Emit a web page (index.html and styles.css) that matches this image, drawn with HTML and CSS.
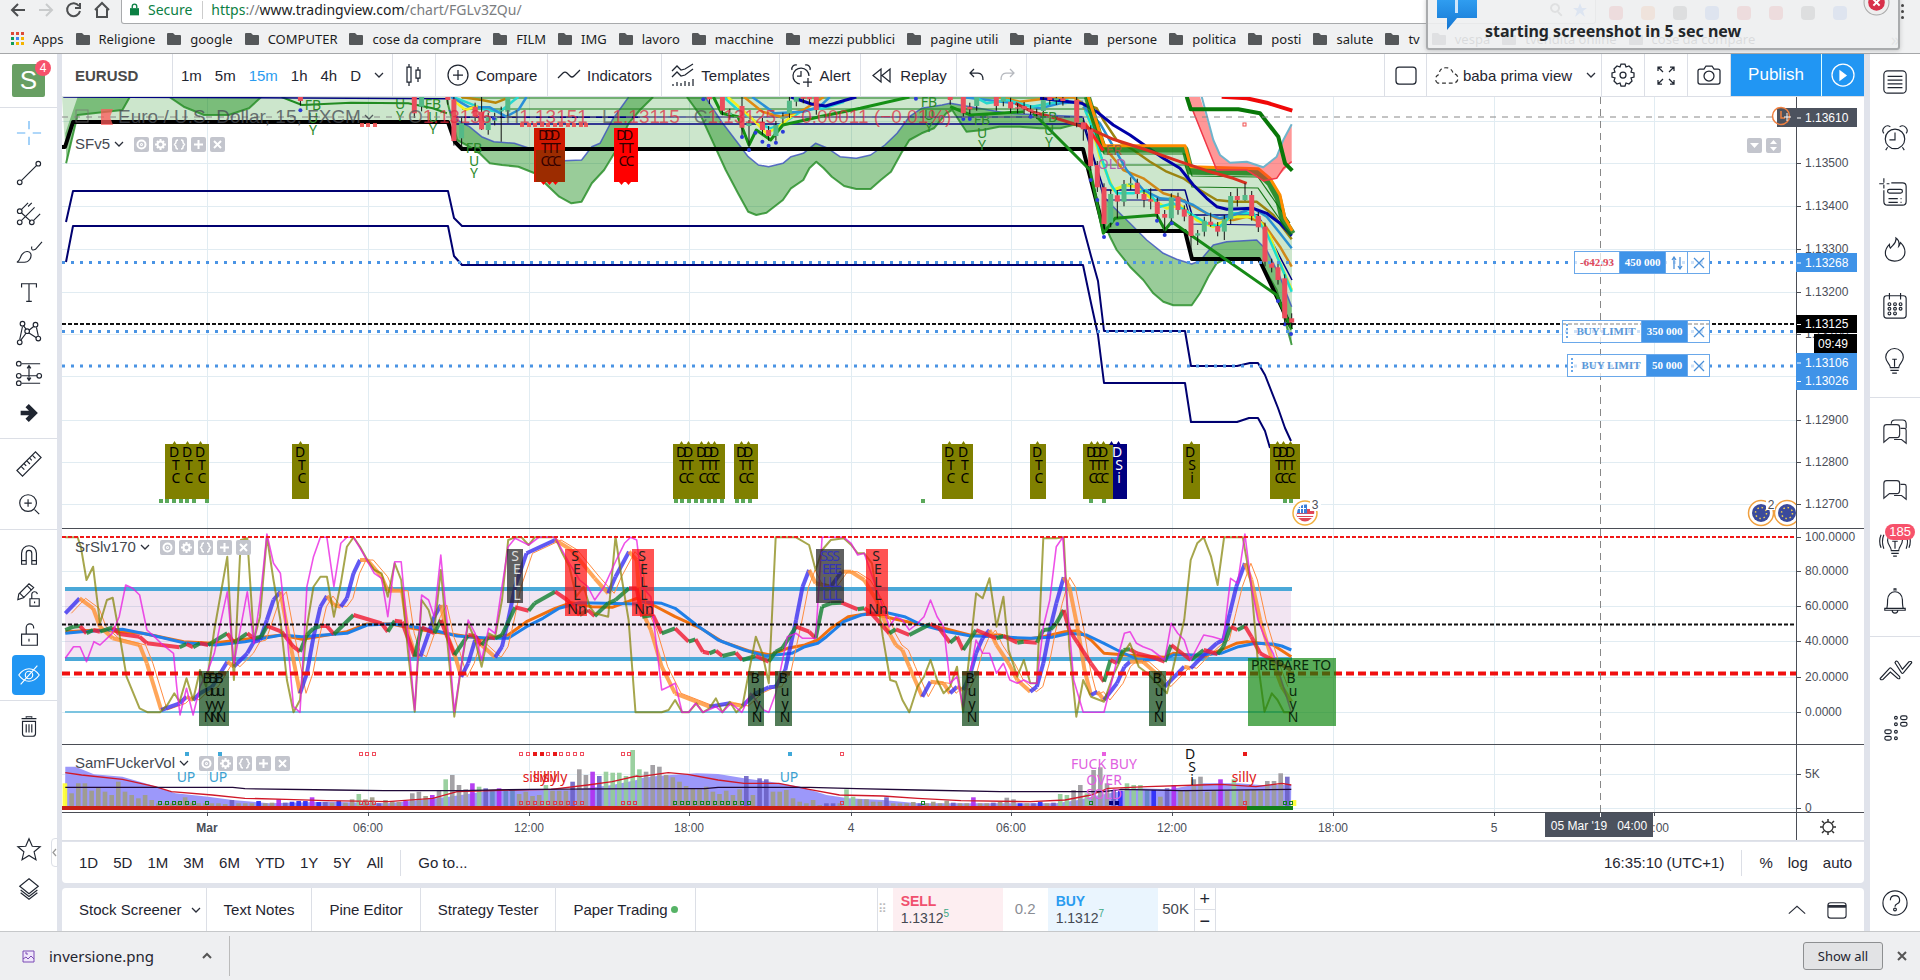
FILE: index.html
```html
<!DOCTYPE html>
<html lang="en">
<head>
<meta charset="utf-8">
<title>EURUSD chart</title>
<link rel="stylesheet" href="styles.css">
</head>
<body>
<svg class="defs" aria-hidden="true">
  <symbol id="folder" viewBox="0 0 14 12"><path fill="#55585a" d="M1 0h5l2 2h5q1 0 1 1v8q0 1-1 1H1q-1 0-1-1V1q0-1 1-1z"/></symbol>
  <symbol id="caret" viewBox="0 0 10 6"><path class="st" d="M1 1l4 4 4-4"/></symbol>
  <symbol id="chats" viewBox="0 0 28 28"><path class="st" d="M5 5h11q3 0 3 3v7q0 4-3 4H8l-6 5V8q0-3 3-3zM20 9h4q2 0 2 2v14l-5-4h-8"/></symbol>
</svg>

<header class="browser">
  <div class="address">
    <button class="nav" aria-label="Back"><svg viewBox="0 0 18 18"><path d="M16 9H3M9 3L3 9l6 6"/></svg></button>
    <button class="nav dim" aria-label="Forward"><svg viewBox="0 0 18 18"><path d="M2 9h13M9 3l6 6-6 6"/></svg></button>
    <button class="nav" aria-label="Reload"><svg viewBox="0 0 18 18"><path d="M14 5a6.500 6.500 0 1 0 1 5M15 2v5h-5"/></svg></button>
    <button class="nav" aria-label="Home"><svg viewBox="0 0 18 18"><path d="M2 9l7-7 7 7M4 8v8h10V8"/></svg></button>
    <div class="url">
      <svg class="lock" viewBox="0 0 10 13"><path fill="#0b8043" d="M0 5h10v8H0z"/><path fill="none" stroke="#0b8043" stroke-width="1.500" d="M2.500 5V3a2.500 2.500 0 0 1 5 0v2"/></svg>
      <span class="secure">Secure</span><span class="bar"></span>
      <span><b class="secure">https</b>://<b class="host">www.tradingview.com</b>/chart/FGLv3ZQu/</span>
      <span class="extensions">
        <svg viewBox="0 0 14 14"><path fill="none" stroke="#555" stroke-width="2" d="M6 1a4 4 0 1 0 .1 0M9 9l4 4"/></svg>
        <svg viewBox="0 0 14 14"><path fill="#4285f4" d="M7 0l2 5h5l-4 3 2 6-5-4-5 4 2-6-4-3h5z"/></svg>
      </span>
    </div>
    <div class="extensions outer">
      <i class="x1"></i><i class="x2"></i><i class="x3"></i><i class="x4"></i><i class="x1"></i><i class="x1"></i><i class="x3"></i><i class="x4"></i>
    </div>
    <button class="kebab" aria-label="Menu"><i></i><i></i><i></i></button>
  </div>
  <nav class="bookmarks">
    <a href="#" class="apps"><svg viewBox="0 0 13 13"><path fill="#dd4b39" d="M0 0h3v3H0zM5 0h3v3H5zM10 0h3v3h-3z"/><path fill="#0f9d58" d="M0 5h3v3H0zM0 10h3v3H0z"/><path fill="#4285f4" d="M5 5h3v3H5z"/><path fill="#f4b400" d="M10 5h3v3h-3zM5 10h3v3H5zM10 10h3v3h-3z"/></svg>Apps</a>
    <a href="#"><svg><use href="#folder"/></svg>Religione</a>
    <a href="#"><svg><use href="#folder"/></svg>google</a>
    <a href="#"><svg><use href="#folder"/></svg>COMPUTER</a>
    <a href="#"><svg><use href="#folder"/></svg>cose da comprare</a>
    <a href="#"><svg><use href="#folder"/></svg>FILM</a>
    <a href="#"><svg><use href="#folder"/></svg>IMG</a>
    <a href="#"><svg><use href="#folder"/></svg>lavoro</a>
    <a href="#"><svg><use href="#folder"/></svg>macchine</a>
    <a href="#"><svg><use href="#folder"/></svg>mezzi pubblici</a>
    <a href="#"><svg><use href="#folder"/></svg>pagine utili</a>
    <a href="#"><svg><use href="#folder"/></svg>piante</a>
    <a href="#"><svg><use href="#folder"/></svg>persone</a>
    <a href="#"><svg><use href="#folder"/></svg>politica</a>
    <a href="#"><svg><use href="#folder"/></svg>posti</a>
    <a href="#"><svg><use href="#folder"/></svg>salute</a>
    <a href="#"><svg><use href="#folder"/></svg>tv</a>
    <a href="#"><svg><use href="#folder"/></svg>vespa</a>
    <a href="#"><svg><use href="#folder"/></svg>tvendita online</a>
    <a href="#"><svg><use href="#folder"/></svg>cose da compare</a>
    <span class="more">»</span>
  </nav>
  <div class="toast" role="status">
    <svg class="bubble" viewBox="0 0 40 30"><defs><linearGradient id="bg1" x1="0" x2="0" y1="0" y2="1"><stop offset="0" stop-color="#2f9df0"/><stop offset="1" stop-color="#1576d2"/></linearGradient></defs><path fill="url(#bg1)" d="M0 0h40v18H20L10 30V18H0z"/><path fill="#cfe6fb" d="M18 0h3v13h-3z"/></svg>
    <strong>starting screenshot in 5 sec new</strong>
    <button class="dismiss" aria-label="Dismiss"><svg viewBox="0 0 26 26"><circle cx="13" cy="13" r="12" fill="#eee" stroke="#aaa"/><circle cx="13" cy="13" r="8" fill="#d8304a"/><path stroke="#fff" stroke-width="2" d="M10 10l6 6M16 10l-6 6"/></svg></button>
  </div>
</header>

<div class="app">
  <aside class="rail left">
    <div class="logo">S<span class="count">4</span></div>
    <hr>
    <button aria-label="Cross" class="blue"><svg viewBox="0 0 28 28"><path d="M14 1v9M14 18v9M1 14h9M18 14h9"/></svg></button>
    <button aria-label="Trend line"><svg viewBox="0 0 28 28"><circle cx="4" cy="24" r="2.500"/><circle cx="24" cy="4" r="2.500"/><path d="M6 22L22 6"/></svg></button>
    <button aria-label="Pitchfork"><svg viewBox="0 0 28 28"><circle cx="4" cy="12" r="2.500"/><circle cx="4" cy="24" r="2.500"/><circle cx="17" cy="24" r="2.500"/><path d="M6 10l7-7M6 22L20 8M19 22l7-7M6 14l10 9M17 3l-4 4"/></svg></button>
    <button aria-label="Brush"><svg viewBox="0 0 28 28"><path d="M1 24c4-2 3-6 6-9 3-4 8-3 9 0 1 4-2 9-7 9zM17 7c-1 5 2 4 4 3l7-8"/></svg></button>
    <button aria-label="Text"><svg viewBox="0 0 28 28"><path d="M6 8V4h16v4M14 4v19M11 23h6"/></svg></button>
    <button aria-label="Patterns"><svg viewBox="0 0 28 28"><circle cx="7" cy="4" r="2.500"/><circle cx="21" cy="5" r="2.500"/><circle cx="12" cy="12" r="2.500"/><circle cx="4" cy="24" r="2.500"/><circle cx="24" cy="20" r="2.500"/><path d="M7 7L4 21M8 6l3 4M19 7l-5 4M22 8l2 9M14 14l8 5M11 14L5 22"/></svg></button>
    <button aria-label="Prediction"><svg viewBox="0 0 28 28"><circle cx="3" cy="4" r="2.500"/><circle cx="3" cy="17" r="2.500"/><circle cx="25" cy="17" r="2.500"/><circle cx="3" cy="25" r="2.500"/><path d="M6 4h20M6 17h17M6 25h20M14 7v14M12 9l2-3 2 3M12 19l2 3 2-3"/></svg></button>
    <button aria-label="Arrow"><svg viewBox="0 0 28 28"><path stroke-width="5" d="M5 14h14M12 6l8 8-8 8"/></svg></button>
    <hr>
    <button aria-label="Measure"><svg viewBox="0 0 28 28"><path d="M1 21L21 1l6 6L7 27zM6 17l3 3M9 14l2 2M12 11l3 3M15 8l2 2M18 5l3 3"/></svg></button>
    <button aria-label="Zoom"><svg viewBox="0 0 28 28"><circle cx="13" cy="13" r="9"/><path d="M20 20l5 5M13 9v8M9 13h8"/></svg></button>
    <hr>
    <button aria-label="Magnet"><svg viewBox="0 0 28 28"><path d="M6 24V12a8 8 0 0 1 16 0v12h-5V12a3 3 0 0 0-6 0v12zM6 20h5M17 20h5"/></svg></button>
    <button aria-label="Lock drawing"><svg viewBox="0 0 28 28"><path d="M2 19l1-6L14 2l5 4L8 17zM4 12l5 5M12 4l5 5M15 18h10v8H15zM17 18v-4a3 3 0 0 1 6-1M20 21v2"/></svg></button>
    <button aria-label="Unlock"><svg viewBox="0 0 28 28"><path d="M6 13h17v12H6zM11 13V6a4 4 0 0 1 8 0v1M14 18v3"/></svg></button>
    <button aria-label="Hide drawings" class="on"><svg viewBox="0 0 28 28"><path d="M3 14c6-9 16-9 22 0-6 9-16 9-22 0zM23 4L5 24"/><circle cx="14" cy="14" r="4"/></svg></button>
    <hr>
    <button aria-label="Remove"><svg viewBox="0 0 28 28"><path d="M6 6h16M7 9h14v13q0 3-3 3h-8q-3 0-3-3zM11 5V4h6v1M11 12v9M14 12v9M17 12v9"/></svg></button>
    <span class="fill"></span>
    <button aria-label="Favorites"><svg viewBox="0 0 28 28"><path d="M14 3l3.500 8 8.500.500-6.500 5.500 2 8.500-7.500-4.500-7.500 4.500 2-8.500L2 11.500l8.500-.500z"/></svg></button>
    <button aria-label="Object tree"><svg viewBox="0 0 28 28"><path d="M14 3l10 8-10 8-10-8zM5 15l9 7 9-7M5 18l9 7 9-7"/></svg></button>
    <span class="grip"><svg viewBox="0 0 5 9"><path d="M4 1L1 4.500l3 3.500"/></svg></span>
  </aside>

  <main class="center">
    <div class="toolbar">
      <button class="cell symbol">EURUSD</button>
      <div class="cell intervals"><button>1m</button><button>5m</button><button class="cur">15m</button><button>1h</button><button>4h</button><button>D</button><button aria-label="More intervals"><svg class="car"><use href="#caret"/></svg></button></div>
      <button class="cell w43" aria-label="Candles"><svg class="ic" viewBox="0 0 24 24"><path d="M5 4h4v15H5zM7 1v3M7 19v4M14 7h4v8h-4zM16 4v3M16 15v4"/></svg></button>
      <button class="cell cmp"><svg class="ic" viewBox="0 0 24 24"><circle cx="12" cy="12" r="10"/><path d="M12 7v10M7 12h10"/></svg>Compare</button>
      <button class="cell ind"><svg class="ic" viewBox="0 0 24 24"><path d="M1 15l5-5q2-2 4 0l3 3q2 2 4 0l6-6"/></svg>Indicators</button>
      <button class="cell tpl"><svg class="ic" viewBox="0 0 24 24"><path d="M1 8l5-5 4 4 4-1 8-5M1 14l5-5 4 4 4-1 8-6M2 23v-2M6 23v-4M10 23v-3M14 23v-5M18 23v-4M22 23v-7"/></svg>Templates</button>
      <button class="cell alr"><svg class="ic" viewBox="0 0 24 24"><path d="M10 21a8 8 0 1 1 9-8M11 8v5H7M2 7a4 4 0 0 1 5-5M15 2a4 4 0 0 1 5 5M18 15v9M13 19h9"/></svg>Alert</button>
      <button class="cell rep"><svg class="ic" viewBox="0 0 24 24"><path d="M11 6v13l-8-6.500zM20 6v13l-8-6.500z"/></svg>Replay</button>
      <div class="cell undo"><button aria-label="Undo"><svg class="ic" viewBox="0 0 24 24"><path d="M9 6L5 10l4 4M5 10h8q5 0 5 7"/></svg></button><button aria-label="Redo" class="dim"><svg class="ic" viewBox="0 0 24 24"><path d="M15 6l4 4-4 4M19 10h-8q-5 0-5 7"/></svg></button></div>
      <span class="fill"></span>
      <button class="cell w43 lead" aria-label="Layout"><svg class="ic" viewBox="0 0 24 24"><rect x="2" y="4" width="20" height="17" rx="3"/></svg></button>
      <button class="cell view"><svg class="cloud" viewBox="0 0 28 24"><path stroke-dasharray="4 3" d="M6 20a5 5 0 0 1 1-9q1-8 9-7 5 1 6 6a5 5 0 0 1 0 10z"/></svg>baba prima view<svg class="car"><use href="#caret"/></svg></button>
      <button class="cell w43" aria-label="Settings"><svg class="ic" viewBox="0 0 24 24"><circle cx="12" cy="12" r="3"/><path d="M10 1h4l1 3 3-1 3 3-1 3 3 1v4l-3 1 1 3-3 3-3-1-1 3h-4l-1-3-3 1-3-3 1-3-3-1v-4l3-1-1-3 3-3 3 1z"/></svg></button>
      <button class="cell w43" aria-label="Fullscreen"><svg class="ic" viewBox="0 0 24 24"><path d="M4 8V4h4M4 4l5 5M16 4h4v4M20 4l-5 5M4 17v4h4M4 21l5-5M16 21h4v-4M20 21l-5-5"/></svg></button>
      <button class="cell w43" aria-label="Snapshot"><svg class="ic" viewBox="0 0 24 24"><path d="M3 6h4l2-3h6l2 3h4q2 0 2 2v11q0 2-2 2H3q-2 0-2-2V8q0-2 2-2z"/><circle cx="12" cy="13" r="5"/></svg></button>
      <button class="publish">Publish</button>
      <button class="play" aria-label="Play"><svg class="ic" viewBox="0 0 24 24"><circle cx="12" cy="12" r="11"/><path fill="#fff" d="M9 8v9l6-4.500z"/></svg></button>
    </div>

    <section class="chart">
      <svg id="plot" viewBox="62 97 1802 744" aria-label="EURUSD 15 minute chart"></svg>
      <div class="legend main"><svg class="flag" viewBox="0 0 40 18"><rect x="1" y="2" width="12" height="12" fill="none" stroke="#777"/><path fill="#ff5a5a" d="M26 1h12l-3 8 3 8H26z"/></svg>Euro / U.S. Dollar, 15, FXCM<svg class="car"><use href="#caret"/></svg></div>
      <div class="ohlc"><span>O<b>1.13136</b></span><span>H<b>1.13151</b></span><span>L<b>1.13115</b></span><span>C<b>1.13125</b></span><b>−0.00011 (−0.01%)</b></div>
      <div class="legend one">SFv5<svg class="car"><use href="#caret"/></svg><span class="tools"></span></div>
      <div class="legend two">SrSlv170<svg class="car"><use href="#caret"/></svg><span class="tools"></span></div>
      <div class="legend three">SamFUckerVol<svg class="car"><use href="#caret"/></svg><span class="tools"></span></div>
      <div class="panectl"><button aria-label="Collapse"><svg viewBox="0 0 15 15"><path d="M3 5h9l-4.500 5z"/></svg></button><button aria-label="Move"><svg viewBox="0 0 15 15"><path d="M4 6l3.500-4L11 6zM4 9l3.500 4L11 9z"/></svg></button></div>
      <div class="order o1"><span class="loss">-642.93</span><span class="qty">450 000</span><button aria-label="Reverse"><svg viewBox="0 0 14 14"><path d="M4 13V1M2 4l2-3 2 3M10 1v12M8 10l2 3 2-3"/></svg></button><button aria-label="Close"><svg viewBox="0 0 14 14"><path d="M2 2l10 10M12 2L2 12"/></svg></button></div>
      <div class="order o2"><span class="kind">BUY LIMIT</span><span class="qty">350 000</span><button aria-label="Cancel"><svg viewBox="0 0 14 14"><path d="M2 2l10 10M12 2L2 12"/></svg></button></div>
      <div class="order o3"><span class="kind">BUY LIMIT</span><span class="qty">50 000</span><button aria-label="Cancel"><svg viewBox="0 0 14 14"><path d="M2 2l10 10M12 2L2 12"/></svg></button></div>
    </section>

    <div class="ranges">
      <button>1D</button><button>5D</button><button>1M</button><button>3M</button><button>6M</button><button>YTD</button><button>1Y</button><button>5Y</button><button>All</button>
      <i></i><button>Go to...</button><span class="fill"></span>
      <button>16:35:10 (UTC+1)</button><i></i><button>%</button><button>log</button><button>auto</button>
    </div>

    <div class="panels">
      <button class="t1">Stock Screener<svg class="car"><use href="#caret"/></svg></button>
      <button>Text Notes</button><button>Pine Editor</button><button>Strategy Tester</button>
      <button class="t5">Paper Trading<span class="dot"></span></button>
      <div class="trade">
        <span class="drag">⠿</span>
        <button class="sell"><b>SELL</b><span>1.1312<sup>5</sup></span></button>
        <span class="spread">0.2</span>
        <button class="buy"><b>BUY</b><span>1.1312<sup>7</sup></span></button>
        <span class="lots">50K</span>
        <span class="step"><button>+</button><button>−</button></span>
      </div>
      <span class="fill"></span>
      <button class="ctl" aria-label="Expand"><svg viewBox="0 0 22 22"><path d="M2 15l9-8 9 8"/></svg></button>
      <button class="ctl" aria-label="Maximize"><svg viewBox="0 0 22 22"><rect x="1" y="3" width="20" height="17" rx="3"/><path stroke-width="3" d="M1 7h20"/></svg></button>
    </div>
  </main>

  <aside class="rail right">
    <button aria-label="Watchlist"><svg viewBox="0 0 28 28"><rect x="2" y="2" width="24" height="24" rx="4"/><path d="M6 8h16M6 12h16M6 16h16M6 20h16"/></svg></button>
    <button aria-label="Alerts"><svg viewBox="0 0 28 28"><circle cx="14" cy="15" r="10.500"/><path d="M14 8v8H8M2 9a5 5 0 0 1 7-7M19 2a5 5 0 0 1 7 7M6 24l-2 3M22 24l2 3"/></svg></button>
    <button aria-label="Data window"><svg viewBox="0 0 28 28"><path d="M10 2h12q4 0 4 4v16q0 4-4 4H6q-4 0-4-4V10M-3 3h5M5 3h3M2-3v5M2 4v4M7 19h10M7 23h10M20 19h1M20 23h1"/><rect x="6" y="9" width="16" height="4" rx="2"/></svg></button>
    <button aria-label="Hotlist"><svg viewBox="0 0 28 28"><path d="M15 1c1 6-4 8-6 11-1-1-1-3-1-4-4 4-5 8-4 12 3 8 16 8 20 0 2-6-1-11-4-14-1 2-1 3-2 4 1-4 0-7-3-9z"/></svg></button>
    <button aria-label="Calendar"><svg viewBox="0 0 28 28"><rect x="2" y="3" width="24" height="24" rx="3"/><path d="M8 0v7M20 0v7"/><circle cx="8" cy="12" r="1.500"/><circle cx="14" cy="12" r="1.500"/><circle cx="20" cy="12" r="1.500"/><circle cx="8" cy="17" r="1.500"/><circle cx="14" cy="17" r="1.500"/><circle cx="20" cy="17" r="1.500"/><circle cx="8" cy="22" r="1.500"/><circle cx="14" cy="22" r="1.500"/></svg></button>
    <button aria-label="Ideas"><svg viewBox="0 0 28 28"><path d="M9 20c0-4-5-6-5-11a9.500 9.500 0 0 1 19 0c0 5-5 7-5 11zM9 23h9M11 26h5M11 11h5M13.500 11v8"/></svg></button>
    <hr>
    <button aria-label="Public chats"><svg viewBox="0 0 28 28"><use href="#chats"/><path d="M10 4q0-4 4-4h8q4 0 4 4v5"/></svg></button>
    <button aria-label="Private chats"><svg viewBox="0 0 28 28"><use href="#chats"/></svg></button>
    <button aria-label="Idea stream"><svg viewBox="0 0 28 28"><path d="M10 20c0-4-4-6-4-11a8 8 0 0 1 16 0c0 5-4 7-4 11zM10 23h8M12 26h4M11 10h6M14 10v8M2 3q-3 7 0 15M-1 3q-3 7 0 14M26 3q3 7 0 15M29 3q3 7 0 14"/></svg><span class="badge">185</span></button>
    <button aria-label="Notifications"><svg viewBox="0 0 28 28"><path d="M5 22q1-2 1-9c0-12 16-12 16 0q0 7 1 9zM3 22h22v2H3zM11 24q0 3 3 3t3-3M13 3V1h2v2"/></svg></button>
    <hr>
    <button aria-label="Order panel"><svg viewBox="0 0 28 28"><path d="M-2 21l10-11q1-1 2 0l9 9q1 3-2 2l-8-7-8 8q-3 1-3-1zM14 4q1-3 3-1l5 8 7-8q3-1 3 1l-9 11q-1 1-2 0z"/></svg></button>
    <button aria-label="DOM"><svg viewBox="0 0 28 28"><circle cx="15" cy="3" r="1.500"/><rect x="20" y="1" width="7" height="4" rx="2"/><circle cx="15" cy="10" r="1.500"/><rect x="20" y="8" width="7" height="4" rx="2"/><rect x="3" y="16" width="7" height="4" rx="2"/><circle cx="15" cy="18" r="1.500"/><rect x="3" y="23" width="7" height="4" rx="2"/><circle cx="15" cy="25" r="1.500"/></svg></button>
    <span class="fill"></span>
    <button aria-label="Help"><svg viewBox="0 0 28 28"><circle cx="14" cy="14" r="13"/><path d="M9 11q0-5 5-5t5 5q0 3-3 4-2 1-2 3"/><circle cx="14" cy="21" r="1.500"/></svg></button>
  </aside>
</div>

<footer class="downloads">
  <svg class="file" viewBox="0 0 13 13"><path fill="#efe6fa" stroke="#7b4bb5" d="M1 1h11v11H1z"/><path fill="none" stroke="#7b4bb5" d="M1 9l3-2 2 2 3-3 3 3M3 3h2v2"/></svg>
  <a href="#">inversione.png</a>
  <button class="up" aria-label="Options"><svg viewBox="0 0 10 6"><path d="M1 5l4-4 4 4"/></svg></button>
  <span class="fill"></span>
  <button class="all">Show all</button>
  <button class="close" aria-label="Close bar"><svg viewBox="0 0 10 10"><path d="M1 1l8 8M9 1L1 9"/></svg></button>
</footer>
<script src="chart.js"></script>
</body>
</html>
```
FILE: styles.css
```css
* { box-sizing: border-box; }
body { margin: 0; min-height: 100vh; display: flex; flex-direction: column; font: 15px "Liberation Sans", Arial, sans-serif; color: #1f2530; background: #fff; overflow-x: hidden; }
button { font: inherit; color: inherit; background: none; border: 0; padding: 0; margin: 0; display: flex; align-items: center; justify-content: center; }
a { color: inherit; text-decoration: none; }
.defs { position: absolute; width: 0; height: 0; }
.st { fill: none; stroke: #2a2e39; stroke-width: 1.25; }
.fill { flex: 1; }
.car { width: 10px; height: 6px; }

.browser { position: relative; height: 54px; font-family: "Noto Sans", sans-serif; background: #f0f1f2; border-bottom: 1px solid #a5a7a9; }
.address { height: 24px; display: flex; padding-left: 9px; align-items: flex-start; overflow: hidden; }
.nav { width: 28px; height: 24px; justify-content: flex-start; }
.nav svg { width: 18px; height: 18px; margin-bottom: 4px; fill: none; stroke: #4d4f51; stroke-width: 2; }
.nav.dim svg { stroke: #c9cbcc; }
.url { width: 1475px; height: 24px; flex: 0 1 1475px; background: #fff; border: 1px solid #a8aaac; border-top: 0; border-radius: 0 0 3px 3px; padding: 0 8px 4px 8px; display: flex; align-items: center; font-size: 14px; color: #7b7d7f; }
.url b { font-weight: 400; }
.url .host { color: #1c1d1e; }
.lock { width: 9px; height: 13px; margin-right: 9px; }
.url .secure { color: #0b8043; }
.bar { width: 1px; height: 18px; background: #ccc; margin: 0 8px 0 10px; }
.extensions { display: flex; gap: 10px; margin-left: auto; }
.extensions svg, .extensions i { width: 14px; height: 14px; border-radius: 4px; }
.outer { margin: 6px 0 0 13px; gap: 18px; }
.x1 { background: #d93030; } .x2 { background: #f07020; } .x3 { background: #444; } .x4 { background: #4a7fe0; }
.kebab { position: absolute; right: 16px; top: 4px; flex-direction: column; gap: 3px; }
.kebab i { width: 3px; height: 3px; border-radius: 2px; background: #444; }
.bookmarks { height: 29px; display: flex; align-items: center; gap: 12px; padding-left: 11px; font-size: 13px; color: #1c1d1e; white-space: nowrap; }
.bookmarks a { display: flex; align-items: center; gap: 9px; }
.bookmarks svg { width: 14px; height: 12px; }
.bookmarks .apps svg { width: 13px; height: 13px; }
.more { margin-left: auto; margin-right: 20px; font-size: 18px; color: #777; }
.toast { position: absolute; z-index: 3; right: 20px; top: -4px; width: 474px; height: 54px; background: rgba(238,240,241,.9); border: 2px solid #a9abad; border-radius: 3px; box-shadow: 0 1px 4px #8886; font-size: 16px; color: #23272a; }
.toast strong { position: absolute; left: 57px; top: 21px; line-height: 24px; white-space: nowrap; }
.bubble { position: absolute; left: 9px; top: 2px; width: 40px; height: 30px; }
.dismiss { position: absolute; right: 8px; top: -9px; }
.dismiss svg { width: 27px; height: 27px; }

.app { flex: 1; display: flex; background: #e0e3eb; }
.rail { position: relative; background: #fff; display: flex; flex-direction: column; align-items: center; flex: none; }
.rail svg { width: 26px; height: 26px; overflow: visible; fill: none; stroke: #1f2530; stroke-width: 1.25; }
.rail hr { width: 100%; height: 1px; border: 0; background: #dcdfe6; flex: none; }
.left { width: 57px; margin-right: 5px; padding-bottom: 22px; }
.left hr { margin: 5px 0; }
.left button { width: 33px; height: 40px; flex: none; }
.left .blue svg { stroke: #60b0f4; }
.left .on { background: #2196f3; border-radius: 4px; }
.left .on svg { stroke: #fff; }
.logo { position: relative; width: 33px; height: 33px; margin: 10px 0 5px; background: #689f63; color: #fff; font-size: 26px; line-height: 33px; text-align: center; border-radius: 2px; flex: none; }
.count, .badge { position: absolute; background: #f7526b; color: #fff; font-size: 12px; line-height: 16px; border-radius: 9px; }
.count { left: 23px; top: -4px; width: 16px; }
.grip { position: absolute; right: -1px; bottom: 64px; width: 7px; height: 29px; border: 1px solid #dcdfe6; border-radius: 4px 0 0 4px; background: #fff; display: flex; align-items: center; }
.grip svg { width: 5px; height: 9px; stroke: #999; }
.right { width: 50px; margin-left: 6px; }
.right button { position: relative; width: 50px; height: 56px; flex: none; }
.right hr { margin: 7px 0; }
.right .badge { right: 5px; top: 7px; font-size: 13px; padding: 0 4px; }

.center { flex: 1; min-width: 0; display: flex; flex-direction: column; }
.toolbar { height: 43px; display: flex; background: #fff; border-bottom: 1px solid #dcdfe6; }
.cell { border-right: 1px solid #dcdfe6; display: flex; align-items: center; justify-content: center; gap: 6px; white-space: nowrap; }
.lead { border-left: 1px solid #dcdfe6; }
.ic { width: 24px; height: 24px; fill: none; stroke: #1f2530; stroke-width: 1.25; flex: none; }
.symbol { width: 111px; justify-content: flex-start; padding-left: 13px; font-weight: 700; color: #4a4a4a; }
.intervals { width: 220px; gap: 13px; }
.cur { color: #2a9cf0; }
.w43 { width: 43px; }
.cmp { width: 112px; } .ind { width: 114px; } .tpl { width: 118px; } .alr { width: 81px; } .rep { width: 96px; } .undo { width: 70px; }
.undo .dim .ic { stroke: #b5b8be; }
.view { width: 175px; gap: 4px; }
.view .car { margin-left: 10px; }
.cloud { width: 27px; height: 23px; fill: none; stroke: #333; stroke-width: 1.25; }
.publish, .play { height: 42px; background: #2196f3; color: #fff; font-size: 17px; }
.publish { width: 91px; border-right: 1px solid #dff; }
.play { width: 42px; }
.play .ic { stroke: #fff; }

.chart { position: relative; background: #fff; }
#plot { display: block; width: 100%; height: auto; }
.ax { font: 12px "Liberation Sans", sans-serif; fill: #4a4e58; }
.mark { font: 14px "Noto Sans", sans-serif; }
.legend { position: absolute; left: 13px; display: flex; align-items: center; gap: 4px; line-height: 20px; color: #444851; white-space: nowrap; }
.main { top: 10px; font-size: 19px; gap: 3px; opacity: .75; }
.flag { width: 40px; height: 18px; }
.one { top: 37px; } .two { top: 440px; } .three { top: 656px; }
.tools { display: flex; gap: 4px; margin-left: 6px; }
.tools button, .panectl button { width: 15px; height: 15px; border-radius: 2px; background: #c3c5cd; color: #fff; }
.tools svg { width: 13px; height: 13px; fill: none; stroke: #fff; stroke-width: 2; }
.ohlc { position: absolute; left: 346px; top: 10px; display: flex; gap: 14px; font-size: 19px; line-height: 20px; color: #555b; white-space: nowrap; }
.ohlc b { font-weight: 400; color: #e0283fb8; }
.panectl { position: absolute; right: 83px; top: 41px; display: flex; gap: 4px; }
.panectl svg { width: 15px; height: 15px; fill: #fff; }
.order { position: absolute; right: 154px; height: 23px; display: flex; border: 1px solid #6aa8ea; background: #fffb; font: bold 11px "Liberation Serif", serif; color: #5b97d8; line-height: 21px; }
.order > * { border-left: 1px solid #6aa8ea; text-align: center; }
.order > :first-child { border-left: 0; }
.order button { width: 22px; }
.order svg { width: 14px; height: 14px; fill: none; stroke: #4a8fd8; stroke-width: 1.25; }
.qty { background: #3f93e8; color: #fff; width: 46px; }
.loss { width: 44px; color: #e0485a; }
.kind { width: 78px; padding-left: 3px; }
.kind::before { content: ""; float: left; width: 3px; height: 14px; margin-top: 3px; border-left: 2px dotted #6aa8ea; }
.o1 { top: 154px; } .o2 { top: 223px; } .o3 { top: 257px; }
.o3 .qty { width: 41px; }

.ranges { height: 41px; margin-top: 1px; background: #fff; border-radius: 0 0 4px 4px; display: flex; align-items: center; gap: 15px; padding: 0 12px 0 17px; }
.ranges i { width: 1px; height: 26px; margin: 0 2px; background: #dcdfe6; }
.panels { flex: 1; margin-top: 5px; background: #fff; border-radius: 4px 4px 0 0; display: flex; }
.panels > button { padding: 0 17px; border-right: 1px solid #dcdfe6; }
.panels .t1 { gap: 9px; padding-right: 5px; }
.panels .t5 { gap: 3px; }
.dot { width: 7px; height: 7px; border-radius: 4px; background: #56b366; }
.trade { margin-left: 181px; display: flex; border-left: 1px solid #dcdfe6; border-right: 1px solid #dcdfe6; }
.drag { width: 15px; line-height: 42px; color: #bbb; font-size: 12px; }
.trade .sell, .trade .buy { width: 110px; flex-direction: column; align-items: flex-start; justify-content: center; padding-left: 8px; line-height: 17px; font-size: 14px; color: #444851; }
.sell { background: #fdeef1; } .buy { background: #eaf5fe; }
.sell b { color: #f0506e; } .buy b { color: #2a9cf0; }
.trade sup { font-size: 10px; line-height: 0; color: #3aa987; }
.spread { width: 45px; text-align: center; line-height: 42px; color: #8a8d94; }
.lots { width: 36px; text-align: center; line-height: 42px; color: #444851; }
.step { width: 21px; border-left: 1px solid #dcdfe6; display: flex; flex-direction: column; }
.step button { flex: 1; width: 100%; font-size: 18px; line-height: 18px; }
.step button + button { border-top: 1px solid #dcdfe6; }
.panels > .ctl { border: 0; width: 40px; padding: 0; }
.ctl svg { width: 20px; height: 20px; fill: none; stroke: #2a2e39; stroke-width: 1.25; }
.ctl:last-child { margin-right: 7px; }

.downloads { height: 49px; background: #eeeff1; border-top: 1px solid #c6c8ca; display: flex; align-items: center; padding: 0 13px 0 22px; font-family: "Noto Sans", sans-serif; }
.downloads a { margin-left: 14px; font-size: 15px; width: 151px; }
.file { width: 13px; height: 13px; }
.up { height: 40px; width: 30px; padding-right: 16px; border-right: 1px solid #bbb; }
.up svg, .close svg { width: 10px; height: 10px; fill: none; stroke: #555; stroke-width: 2; }
.all { width: 80px; height: 28px; border: 1px solid #8d8f91; border-radius: 3px; background: #e2e3e5; font-size: 13px; }
.close { margin-left: 14px; }
```
FILE: chart.js
```js
const plot = document.getElementById("plot");
// Data frames: [origin x, origin y, units per px x, units per px y]
const F = { A: [0, 0, 2.45, 3], B: [640, 0, 2.45, 3], C: [1000, 90, 3, 3], D: [0, 520, 2.45, 3], E: [640, 520, 2.306, 3], P: [0, 0, 1, 1] };
const out = [];
function pts(frame, s) {
  const [ox, oy, sx, sy] = F[frame];
  return s.trim().split(/\s+/).map(p => { const [x, y] = p.split(",").map(Number); return [+(ox + x / sx).toFixed(1), +(oy + y / sy).toFixed(1)]; });
}
const path = a => "M" + a.map(p => p.join(" ")).join("L");
const poly = (a, c, w = 1, o = 1) => out.push(`<path d="${path(a)}" fill="none" stroke="${c}" stroke-width="${w}" opacity="${o}" stroke-linejoin="round"/>`);
const line = (f, s, c, w, o) => poly(pts(f, s), c, w, o);
const area = (f, s, c, o) => out.push(`<path d="${path(pts(f, s))}Z" fill="${c}" opacity="${o}"/>`);
const rect = (x, y, w, h, c, o = 1) => out.push(`<rect x="${x}" y="${y}" width="${w}" height="${h}" fill="${c}" opacity="${o}"/>`);
const text = (x, y, t, c, cls = "mark", anchor = "middle", extra = "") => out.push(`<text x="${x}" y="${y}" fill="${c}" class="${cls}" text-anchor="${anchor}" ${extra}>${t}</text>`);
const dash = (x1, y, x2, c, w, d) => out.push(`<path d="M${x1} ${y}H${x2}" stroke="${c}" stroke-width="${w}" stroke-dasharray="${d}"/>`);
const vcol = (x, y, s, c, step = 13) => [...s].forEach((ch, i) => text(x + (i ? 2 : 0), y + i * step, ch, c));
function updown(a, up, down, w, o) { for (let i = 1; i < a.length; i++) poly([a[i - 1], a[i]], a[i][1] < a[i - 1][1] ? up : down, w, o); }

// grid
const gx = [207, 368, 529, 689, 851, 1011, 1172, 1333, 1494, 1654];
gx.forEach(x => rect(x, 97, 1, 715, "#e1ecf2"));
[121, 163, 206, 249, 292, 334, 376, 420, 462, 504, 571, 606, 641, 677, 712, 774, 808].forEach(y => rect(62, y, 1734, 1, "#e1ecf2"));
out.push('<defs><clipPath id="c1"><path d="M62 97H1796V528H62z"/></clipPath></defs><g clip-path="url(#c1)">');

// price pane: channels
area("P", "62,97 73,97 1087,97 1104,147 1186,147 1191,168 1258,170 1275,185 1285,215 1292,235 1292,327 1259,259 1192,259 1185,231 1104,231 1083,149 462,149 455,142 448,122 73,122 65,147", "#008000", .2);
area("A", "163,490 190,345 300,330 318,291 190,291 160,400", "#008000", .4);
area("A", "415,291 450,320 500,345 560,345 610,325 640,291", "#008000", .4);
const low1 = "1095,300 1120,420 1150,440 1175,460 1200,490 1230,495 1270,500 1310,520 1340,555 1370,590 1400,610 1425,605 1450,550 1480,510 1510,450 1540,370 1568,330 1600,291";
const up1 = "1100,330 1120,360 1150,380 1180,410 1210,425 1260,430 1310,450 1345,470 1380,482 1425,480 1450,440 1470,430 1500,360 1540,291";
const low2 = "115,291 150,350 180,430 210,510 240,580 265,635 285,645 310,638 350,600 370,565 400,540 415,505 432,485 450,505 470,530 500,558 530,567 565,567 590,540 615,515 640,460 660,420 690,400 720,385 750,340 765,330 800,395 840,390 880,380 930,380 980,385 1030,385 1060,375 1085,375";
const up2 = "160,291 200,365 240,430 265,470 290,495 315,500 350,490 370,470 400,460 430,430 460,445 490,470 530,475 565,465 600,435 630,400 660,350 690,325 740,315 760,310 900,340 1085,350";
const low3 = "312,400 330,440 350,480 390,530 430,570 460,610 490,635 520,646 575,646 600,610 625,560 650,520 680,505 775,505 830,600 875,765";
const up3 = "312,320 340,350 390,400 440,450 490,490 530,508 575,522 600,512 640,465 680,455 770,450 800,480 840,560 875,650";
[["A", low1, up1], ["B", low2, up2], ["C", low3, up3]].forEach(([f, l, u]) => {
  area(f, l + " " + u.split(" ").reverse().join(" "), "#008000", .4);
  line(f, l, "#228b22", 2, .8); line(f, u, "#3a4fc0", 1.5, .8);
});
line("A", "162,490 190,345 300,330 318,291", "#228b22", 2, .8);
line("A", "415,291 450,320 500,345 560,345 610,325 640,291", "#228b22", 2, .8);
line("A", "690,291 740,315 860,308 1000,310 1060,325 1095,340", "#228b22", 2, 1);
line("A", "155,291 1100,296", "#000080", 1.5);
line("A", "1110,352 1568,352", "#000080", 1.5);
line("P", "454,124 1083,124 1104,190 1185,190 1192,215 1258,215 1292,280", "#000080", 1.5);
line("P", "452,117 1083,117 1104,200 1185,200 1192,224 1258,225", "#000080", 1.2);
[109, 98].forEach(y => line("P", `462,${y} 1087,${y} 1104,${y + 56} 1185,${y + 56} 1192,${y + 78} 1258,${y + 79} 1290,${y + 125}`, "#1a7a1a", 1.2));
line("P", "62,147 65,147 73,122 448,122 455,142 462,149 1083,149 1104,231 1185,231 1192,259 1259,259 1291,327", "#000", 4);
line("P", "66,222 73,191 448,191 454,218 462,226 1083,226 1091,256 1098,281 1104,331 1185,331 1191,366 1237,366 1250,363 1258,363 1265,375 1278,408 1285,428 1291,441", "#000070", 2);
line("P", "66,262 73,226 448,226 454,256 462,265 1083,265 1091,303 1098,335 1104,383 1185,383 1191,422 1237,422 1249,418 1258,418 1265,431 1270,448", "#000070", 2);

// moving averages
line("A", "1110,291 1150,310 1190,330 1225,335 1260,300 1270,291", "#27d8d0", 2.5);
line("A", "1130,291 1180,300 1215,308 1240,296", "#b8860b", 2.5);
line("A", "1105,291 1150,322 1200,322 1240,350 1270,330 1290,291", "#2a8fd8", 2.5);
line("A", "1110,300 1140,330 1170,318", "#f4f020", 2.5);
line("B", "205,291 240,330 290,370 320,385 350,370 400,330 450,325 500,305", "#27d8d0", 2.5);
line("B", "215,291 270,350 310,400 340,380 380,340", "#f4f020", 2.5);
line("B", "255,291 300,335 345,350 400,330 450,291", "#e08a10", 2.5);
line("B", "275,291 330,340 400,335 440,320 465,291", "#2a8fd8", 2.5);
line("B", "370,291 420,312 455,318 490,305 530,291", "#0000a8", 3);
line("B", "180,291 200,340 240,350 267,435 285,390 320,420 350,375 440,350 540,325 660,291", "#149014", 3);
line("B", "760,320 810,345 880,340 940,335", "#149014", 3);
line("B", "790,291 850,300 920,310 980,325 1030,310 1085,305", "#2a8fd8", 2.5);
line("B", "880,291 930,305 1000,295 1060,291 1085,310", "#e08a10", 2.5);
line("B", "820,291 850,310 900,300 960,320 1050,300", "#27d8d0", 2.5);
line("B", "920,310 960,335 1020,355 1085,380", "#c03028", 3);
line("C", "100,70 270,240 310,430 345,385 470,375 495,420 515,395 830,615 875,718", "#168a16", 3);
line("C", "245,40 290,55 310,90 350,150 400,180 450,215 500,245 550,265 600,300 650,330 700,335 770,335 820,375 875,448", "#9a8410", 2.5);
line("C", "250,50 290,110 320,180 370,240 430,265 490,310 540,325 600,360 650,385 700,390 740,380 790,400 840,470 875,530", "#d08818", 2.5);
line("C", "260,60 300,200 340,300 380,285 410,290 460,330 500,355 540,345 590,390 640,410 700,380 770,380 810,440 840,520 875,600", "#e8f020", 3);
line("C", "255,60 280,120 300,190 330,280 350,310 400,310 440,300 480,350 520,340 570,370 620,400 660,410 700,370 760,370 800,430 840,520 875,605", "#18e0d0", 2.5);
line("C", "250,50 300,100 340,170 380,240 430,300 480,325 540,330 580,345 620,370 660,385 700,375 760,355 800,380 840,430 875,475", "#2a8fd0", 2.5);
line("C", "120,25 245,40 290,65 340,105 390,135 440,170 490,205 540,235 580,285 620,325 650,350 680,358 760,355 800,370 840,400 875,437", "#0000a8", 3);
line("C", "262,20 310,178 555,178 572,244 775,247 810,280 835,325 850,390 877,432", "#0a7a0a", 7, .8);
line("C", "265,20 312,167 555,167 572,230 775,236 810,265 840,315 855,385 877,422", "#ff8c00", 3);
line("C", "255,100 310,182", "#ff2020", 3);
line("C", "245,105 300,130 340,148 440,180 540,215 620,242 700,265 740,280", "#d83020", 3);

// upper right band
area("C", "560,20 600,20 640,150 660,195 690,218 740,215 790,232 830,200 850,150 875,103 875,215 830,265 790,275 740,240 650,240", "#ff3030", .5);
line("C", "562,20 650,240 740,240 790,272 830,265 850,235 875,215", "#f03848", 1.5);
line("C", "605,20 640,150 660,195 690,218 740,215 790,232 830,200 850,150 875,103", "#6fb4cc", 2);
line("C", "560,20 572,58 715,58 780,70 835,140 855,220 877,242", "#087808", 4);
line("C", "665,20 740,25 800,38 877,62", "#f00808", 4);

// candles: frame, then color + x,top,bottom,low
function candles(f, s) {
  const [ox, oy, sx, sy] = F[f];
  s.trim().split(/\s+/).forEach(c => {
    const [x, t, b, hi, lo] = c.slice(1).split(",").map(Number), X = ox + x / sx;
    rect((X - .5).toFixed(1), (oy + (hi || t - 12) / sy).toFixed(1), 1, (((lo || b + 14) - (hi || t - 12)) / sy).toFixed(1), "#111");
    rect((X - 2.5).toFixed(1), (oy + t / sy).toFixed(1), 5, ((b - t) / sy).toFixed(1), c[0] === "r" ? "#eb4d5c" : "#53b987");
  });
}
candles("A", "r736,291,303 r1015,291,340 e1033,291,320 r1097,291,300 r1112,298,423 e1131,370,415,350,442 r1164,320,350 r1180,335,388,291,390 e1196,350,390 e1212,350,362 e1228,330,334,320,425 e1244,291,335");
candles("B", "r170,291,298 r202,291,332 e220,338,345 r250,318,383,291,410 e267,370,378,360,440 r300,366,390 r315,390,408 e333,375,408 e350,350,356 e366,302,340 e383,291,305 r400,291,296 r415,291,298 r432,291,330 r760,291,300 r792,291,340 r808,320,328 e825,291,318 r873,291,318 e890,291,305 r908,305,325 r925,322,326 r941,318,328 r957,328,335 r972,338,342 e988,300,333 r1004,291,300 e1020,295,301 r1036,295,303");
candles("C", "r230,30,98 r250,97,118,90,152 r272,118,228 r292,225,292 r312,292,402 e332,312,398 r352,316,335,300,385 e372,282,335 e392,280,285,262,300 r412,278,312 r432,312,330,300,352 r452,328,335,295,358 r472,335,372 r494,372,383,360,435 e514,322,385 r534,320,360 r553,358,380 r573,378,438,370,510 e593,430,437,420,465 e613,392,425 r632,395,405,368,410 r653,408,425 e673,388,425,375,450 e692,318,388 r712,318,330,295,350 e735,315,330,280,332 r755,315,378 r775,378,412 r795,410,515 r815,518,533 r834,532,570 r854,565,685 r875,685,698,670,715");
const dot = (f, s) => pts(f, s).forEach(p => out.push(`<circle cx="${p[0]}" cy="${p[1]}" r="2" fill="#2b3bd8"/>`));
dot("A", "736,331 1210,355");
dot("B", "250,411 267,450 283,398 300,425 315,437 333,428 350,395 155,298 676,296 792,357 808,357 957,350");
dot("C", "272,270 292,330 312,441 352,402 471,392 494,435 515,400 834,633 854,703 873,732");
[[313, 110, "FBUY"], [400, 109, "UY"], [433, 109, "FBUY"], [474, 153, "FBUY"], [929, 107, "FBUY"], [982, 125, "FBUY"], [1049, 122, "FBUY"]].forEach(([x, y, s]) => {
  if (s === "UY") { text(x, y, "U", "#2a8a2a"); text(x, y + 12, "Y", "#2a8a2a"); return; }
  text(x, y, "FB", "#2a8a2a"); text(x, y + 13, "U", "#2a8a2a"); text(x, y + 25, "Y", "#2a8a2a");
});
text(1114, 155, "ER", "#a05a40"); text(1112, 169, "OLD", "#b060b0");
[[534, 565, [543, 549, 555]], [614, 638, [621, 628]]].forEach(([a, b, xs], i) => {
  rect(a, 128, b - a, 54, i ? "#ff0000" : "#d01800"); if (!i) rect(a + 2, 150, b - a - 2, 32, "#7a3a00", .6);
  xs.forEach(x => { vcol(x, 140, "DTC", "#300"); out.push(`<path d="M${x - 2} 182h5l-2.500 3z" fill="#f00"/>`); });
});
[360, 366, 373, 520, 527, 533, 540, 546, 553, 559, 566, 572, 579, 584].forEach(x => rect(x, 123, 4, 4, "#f05050", .9));
out.push('<rect x="1243" y="123" width="3" height="3" fill="#fff" stroke="#f05050"/>');

// bottom signal boxes
const tip = (x, c) => out.push(`<path d="M${x - 2} 445l2.500-4 2.500 4z" fill="${c}"/>`);
[[165, 209, "174 187 200"], [292, 309, "300"], [673, 725, "681 688 701 708 714"], [734, 758, "741 748"], [942, 973, "949 963"], [1030, 1046, "1037"], [1083, 1113, "1091 1097 1103"], [1270, 1300, "1277 1283 1290"]].forEach(([a, b, s]) => {
  rect(a, 444, b - a, 55, "#808000"); s.split(" ").forEach(x => { vcol(+x, 457, "DTC", "#000"); tip(+x, "#808000"); });
});
rect(1113, 444, 14, 55, "#000080"); vcol(1117, 457, "DSi", "#fff"); tip(1111, "#000080"); tip(1118, "#000080");
rect(1183, 444, 17, 55, "#808000"); vcol(1190, 457, "DSi", "#000"); tip(1191, "#808000");
[159, 165, 172, 179, 185, 192, 205, 674, 680, 687, 694, 700, 707, 713, 720, 735, 741, 748, 921, 1089, 1102, 1283, 1289].forEach(x => rect(x, 499, 4, 4, "#5aa85a"));

// price lines
[262.5, 331.5, 366].forEach(y => dash(62, y, 1796, "#4a94e4", 3, "3 6"));
dash(62, 324, 1796, "#111", 2, "4 2");
out.push("</g>");

// event flags
out.push('<circle cx="1305" cy="513" r="12" fill="#fff" stroke="#f0b040" stroke-width="1.5"/><path fill="#e04858" d="M1305 509h9q1 4-1 8h-16q-1-2 0-4h8z"/><path fill="#fff" d="M1297 514h17v2h-17z"/><path fill="#e04858" d="M1298 518h14q-7 7-14 0z"/><path fill="#3c7fd8" d="M1297 513a8.500 8.500 0 0 1 8-8.500h2v9z"/><path stroke="#fff" d="M1300.500 505v8M1303.500 505v8M1297 508.500h9"/>');
[1761, 1787].forEach(x => out.push(`<circle cx="${x}" cy="513" r="12.500" fill="#fff" stroke="#f0a040" stroke-width="1.500"/><circle cx="${x}" cy="513" r="9" fill="#3a4a9c"/><circle cx="${x}" cy="513" r="5.500" fill="none" stroke="#f0d050" stroke-width="1.500" stroke-dasharray="1.500 2.800"/>`));
rect(1310, 499, 11, 12, "#fff"); text(1315, 509, "3", "#111", "ax"); rect(1766, 499, 9, 11, "#fff"); text(1771, 509, "2", "#111", "ax");
rect(1796, 498, 14, 29, "#fff");

// oscillator pane
rect(65, 589, 1226, 70, "#800080", .1);
rect(65, 587, 1227, 4, "#4aa8d8"); rect(65, 657, 1227, 4, "#4aa8d8"); rect(65, 711, 1227, 2, "#7cc4e0");
const olive = [...pts("D", "160,52 190,52 198,80 212,180 228,140 245,310 262,240 276,233 295,360 310,470 342,565 362,577 392,577 410,555 427,520 440,545 457,475 473,540 490,450 505,500 525,330 557,110 573,480 590,60 606,55 622,360 637,290 654,50 670,180 687,300 703,480 719,577 735,540 752,320 768,200 785,170 801,170 818,290 835,190 850,80 866,52 882,80 900,120 917,150 935,160 950,230 967,130 983,180 1000,400 1016,575 1033,240 1050,270 1064,330 1080,150 1097,380 1113,590 1130,440 1147,310 1164,360 1180,440 1197,340 1213,350 1230,240 1245,60 1262,52 1278,52 1295,75 1310,52 1360,52 1378,100 1395,140 1412,230 1430,200 1445,260 1457,280 1490,290 1508,50 1520,150 1540,300 1557,577"), ...pts("E", "0,577 50,577 66,570 81,540 97,577 112,577 130,550 145,577 160,565 175,535 190,577 207,545 222,577 236,560 252,450 267,350 282,400 297,490 313,52 360,52 390,75 405,150 420,90 440,60 470,55 487,75 502,100 517,100 535,130 560,350 577,480 590,485 605,540 621,577 640,500 655,470 670,420 685,480 700,520 715,500 731,440 745,577 760,400 775,220 790,235 806,175 822,320 838,230 850,390 870,470 885,420 900,490 915,490 930,55 960,55 977,52 990,380 1006,590 1022,480 1040,530 1070,545 1090,470 1115,400 1130,370 1150,440 1170,460 1200,500 1215,520 1230,440 1255,300 1270,120 1285,70 1300,52 1317,110 1332,195 1347,52 1390,52 1410,200 1425,430 1440,575 1457,520 1470,540 1485,577 1502,577")];
const pink = [...pts("D", "160,415 180,380 196,380 212,425 230,365 245,375 275,340 292,290 308,195 325,205 342,225 360,330 378,350 395,370 410,385 425,400 433,500 441,585 457,505 473,585 490,500 510,450 525,400 540,310 557,215 573,430 590,320 606,215 622,370 637,240 654,42 670,130 687,160 703,340 719,560 735,577 752,200 768,110 785,52 801,52 818,200 835,70 850,52 866,52 885,90 917,160 935,175 950,290 967,125 983,125 1016,570 1033,225 1050,240 1064,290 1080,105 1097,330 1113,575 1147,300 1164,340 1180,420 1197,325 1213,340 1230,200 1245,80 1262,55 1295,75 1320,52 1360,52 1395,130 1420,180 1440,200 1457,240 1480,200 1510,120 1530,70 1545,52 1560,60"), ...pts("E", "5,200 25,230 50,510 66,500 81,490 97,577 112,577 128,550 145,577 175,560 190,577 210,550 235,577 255,520 285,570 297,577 313,520 340,350 360,340 375,355 405,355 420,52 470,52 487,70 502,105 517,100 560,260 575,320 590,290 605,300 621,330 640,310 655,290 670,240 685,290 700,320 715,490 731,470 745,560 760,470 775,360 790,400 806,400 822,460 838,430 853,480 870,490 885,480 900,490 915,490 930,320 945,240 960,80 975,52 985,250 1000,480 1022,577 1070,577 1085,500 1100,420 1117,340 1130,335 1145,370 1160,380 1180,390 1210,420 1225,310 1240,340 1255,360 1270,420 1300,345 1320,350 1345,360 1362,175 1378,190 1395,42 1410,200 1425,300 1440,350 1460,400 1502,577")];
const stoch = [...pts("D", "160,280 195,235 228,265 245,320 276,355 342,375 360,430 395,570 440,550 457,530 473,540 490,520 520,500 557,425 573,440 606,400 622,365 637,360 654,300 670,240 687,215 703,320 735,520 752,460 768,350 785,260 801,228 818,255 835,260 850,235 866,160 882,120 900,120 935,170 950,212 985,212 1000,340 1016,400 1030,410 1050,340 1064,290 1080,255 1097,350 1113,400 1130,470 1147,430 1164,360 1180,375 1213,412 1230,380 1245,300 1262,200 1290,100 1360,60 1400,90 1440,150 1457,175 1490,220 1508,170 1541,95 1560,120"), ...pts("E", "0,260 25,330 50,440 81,520 160,560 207,550 236,558 267,520 297,502 313,500 335,450 360,300 375,200 390,150 405,190 440,200 465,155 487,155 517,180 545,240 575,340 590,375 605,390 621,440 651,530 670,485 700,490 715,520 731,500 745,510 760,470 775,400 790,355 806,330 822,375 850,430 870,480 900,515 915,500 930,430 945,330 960,250 977,172 990,200 1010,330 1025,450 1040,525 1055,515 1070,540 1100,490 1117,440 1130,425 1160,425 1190,460 1210,500 1240,460 1255,440 1270,445 1300,405 1330,370 1345,360 1360,280 1375,200 1395,130 1410,180 1430,300 1460,430 1480,500 1502,545")];
const rsi = [...pts("D", "160,330 180,320 196,318 212,340 228,330 245,335 276,322 292,342 342,350 360,370 395,375 440,382 457,372 473,382 490,370 510,375 557,340 573,368 606,340 622,355 640,350 654,318 690,335 719,380 735,395 752,345 768,325 785,318 801,318 818,343 866,285 935,310 950,335 967,302 985,305 1016,410 1033,322 1064,340 1080,300 1113,405 1147,345 1164,348 1180,375 1197,350 1213,355 1230,345 1262,262 1295,272 1310,250 1360,215 1390,240 1420,285 1440,270 1457,288 1490,250 1508,240 1541,205 1560,205"), ...pts("E", "5,290 30,285 50,340 81,325 112,365 128,358 145,395 160,400 175,392 190,408 221,398 236,420 267,408 297,425 313,395 328,385 360,320 390,335 405,355 420,260 440,250 465,248 502,268 517,265 530,275 575,340 590,328 621,345 670,312 690,325 715,368 731,350 745,390 775,330 822,355 838,348 870,368 885,365 915,368 930,330 947,328 960,310 977,270 990,330 1010,370 1040,430 1070,485 1085,420 1100,430 1115,390 1130,388 1145,400 1190,415 1210,425 1225,375 1270,420 1300,390 1332,402 1345,380 1362,320 1378,330 1395,318 1410,350 1430,400 1502,450")];
const slow = [...pts("D", "160,340 200,335 300,328 370,345 450,368 530,375 600,365 690,345 740,350 850,340 900,315 960,312 1000,318 1060,330 1120,348 1200,355 1245,355 1290,320 1330,295 1370,265 1420,248 1480,250 1560,252"), ...pts("E", "0,245 50,250 81,265 130,315 180,360 240,390 290,408 350,400 380,380 410,370 430,350 470,305 510,285 560,275 610,290 650,315 710,335 760,347 850,352 900,355 950,352 990,340 1030,345 1070,370 1100,390 1150,420 1210,418 1230,405 1290,405 1340,400 1380,380 1420,370 1460,372 1480,378 1502,390")];
const mid = [...pts("D", "160,335 240,330 350,340 450,365 520,370 600,358 690,345 740,358 850,335 900,312 960,312 990,320 1060,335 1120,345 1190,358 1245,345 1290,305 1360,265 1400,248 1450,260 1500,262 1560,235"), ...pts("E", "0,240 30,255 81,290 140,325 190,365 250,392 300,405 340,385 380,375 410,360 440,325 480,290 530,280 580,295 640,312 700,325 760,345 830,345 880,360 930,350 980,335 1010,332 1040,360 1070,400 1150,408 1210,412 1230,400 1300,410 1340,390 1375,370 1400,365 1430,370 1460,375 1502,410")];
poly(mid, "#f07010", 3); poly(slow, "#2080e8", 3);
poly(stoch.map(([x, y]) => [+(x + 6).toFixed(1), y]).filter(p => p[0] < 1292), "#ff8c40", 1);
updown(stoch, "#3a30f0", "#ff9030", 4, .8);
updown(rsi, "#108030", "#f01830", 4, .8);
poly(olive, "#808000", 2, .7); poly(pink, "#e818e0", 1.6, .75);
dash(62, 537, 1796, "#f01818", 2, "4 2"); dash(62, 624.5, 1796, "#111", 2, "4 2"); dash(62, 673.5, 1796, "#f01010", 4, "8 4");
[[507, 523, [515], "SELL", "#222", "#ddd"], [565, 587, [575], "SELL", "#ff1010", "#222"], [632, 654, [642], "SELL", "#ff1010", "#222"], [816, 844, [824, 830, 836], "SELL", "#222", "#33b"], [866, 888, [876], "SELL", "#ff1010", "#222"]].forEach(([a, b, xs, s, c, t]) => {
  const red = c[1] === "f"; rect(a, 549, b - a, red ? 67 : 54, c, .72);
  xs.forEach(x => vcol(x, 561, s, t)); if (red) text(a + 12, 614, "Nn", t);
});
[[199, 229, [207, 213, 219]], [748, 764, [755]], [775, 792, [783]], [962, 979, [970]], [1149, 1166, [1157]]].forEach(([a, b, xs]) => {
  rect(a, 671, b - a, 55, "#104a18", .72); xs.forEach(x => vcol(x, 683, "BuyN", "#061006"));
});
rect(1248, 658, 88, 68, "#0a840a", .68); text(1291, 670, "PREPARE TO", "#0a2a0a"); vcol(1291, 683, "BuyN", "#0a2a0a");

// volume pane
const base = 806;
const vol = [...pts("D", "160,740 185,740 230,763 300,770 370,795 430,820 510,830 570,840 660,850 800,845 950,850 1030,840 1100,830 1200,812 1300,808 1400,810 1500,795 1560,780"), ...pts("E", "0,775 40,768 130,760 180,762 240,775 300,785 370,800 430,825 480,835 560,840 640,850 850,850 960,850 1010,840 1060,825 1150,805 1220,808 1300,790 1380,790 1430,795 1502,795")];
out.push(`<path d="${path([[65, base], ...vol, [1291, base]])}Z" fill="#9c98fa"/>`);
const col = { y: "#ffff30", o: "#a09c88", p: "#6c60c4", m: "#b030f0", b: "#2c2cf8", g: "#9c9a9e", e: "#92cc98", s: "#6486c4" };
("y790 o820 o790 o790 o812 o802 o815 o825 o785 o815 o825 o835 o825 o840 o850 o850 o850 o846 o832 o848 o850 o850 o850 o850 o852 p840 o850 o850 o850 b843 o850 o848 m838 p848 b845 b843 b843 m832 b846 p846 o848 b843 o848 o838 e822 o838 o832 p850 o840 o844 o846 m843 g820 g815 o828 m825 g810 e778 g765 g795 g808 m790 e800 p805 s810 m805 s812 s810 o822 o815 o828 o825 e795 o812 o812 o812 p785 g748 g765 m755 p768 e755 e758 e758 e768 e690 e748 g755 g735 g740 o765 o772 o785 o798 o805 o808 o800 o815 o822 o812 o825 o808 p768 o825 p775 p778 o815 o815 o810 o835 o845 o850 o840 o855 p850 p850 o850 e808 e830 o838 o838 o845 o845 p832 o850 o850 o850 o846 p850 o850 o845 o850 o842 p848 o850 o850 m832 o850 o850 p848 o846 g833 g838 b850 o850 p850 b845 o850 p848 e822 e825 g810 g795 e820 g750 g742 g790 p810 b812 e790 e795 e795 s810 b810 o830 p805 m795 o812 o812 g778 g770 o815 o810 m778 o812 e778 o812 o810 o810 o812 g783 g783 g760 p770 y840").split(" ").forEach((b, i) => {
  const y = 520 + b.slice(1) / 3; rect((62.6 + 6.68 * i).toFixed(1), y.toFixed(1), 4.6, (base - y).toFixed(1), col[b[0]], b[0] === "p" || b[0] === "s" ? .9 : .92);
});
poly([...pts("D", "160,758 200,765 300,778 380,800 420,815 520,825 600,835 700,838 800,842 950,845 1060,835 1120,815 1250,810 1350,808 1440,795 1500,785 1560,768"), ...pts("E", "0,770 65,758 110,763 180,780 240,790 320,790 390,808 460,825 560,828 640,835 740,842 900,845 980,840 1040,825 1080,805 1170,800 1290,795 1340,793 1420,800 1480,790 1502,795")], "#d01828", 1.3);
poly([...pts("D", "160,802 570,802 600,806 820,810 940,812 1130,812 1300,808 1560,806"), ...pts("E", "0,806 150,806 180,802 390,802 500,806 640,810 830,815 1070,815 1110,808 1250,812 1502,808")], "#200838", 1.3);
rect(62, 806, 1185, 4, "#c81e14"); rect(1247, 806, 46, 4, "#128018");
const sq = (a, y, c, f = "none") => a.forEach(x => out.push(`<rect x="${x - 1.5}" y="${y - 1.5}" width="3" height="3" fill="${f}" stroke="${c}"/>`));
sq([361, 367, 374, 521, 528, 548, 561, 568, 575, 582, 623, 629, 842], 754, "#f05060"); sq([535, 542, 555, 1245], 754, "#e81818", "#e81818");
sq([187, 220, 790], 754, "#40a8d8", "#40a8d8"); sq([1104], 754, "#e860e0", "#e860e0");
sq([160, 167, 174, 180, 187, 194, 207, 675, 682, 688, 695, 702, 708, 715, 722, 728, 735, 742, 749, 923, 1091, 1285, 1291], 803, "#158020");
sq([361, 367, 374, 521, 528, 535, 542, 548, 555, 561, 568, 575, 582, 623, 629, 635, 842, 1245], 803, "#d84050"); sq([1111, 1117], 803, "#000080", "#000080");
[186, 218, 789].forEach(x => text(x, 782, "UP", "#3aa0d0"));
text(535, 782, "silly", "#e01818"); text(545, 782, "silly", "#e01818"); text(555, 782, "silly", "#e01818"); text(1244, 782, "silly", "#e01818");
text(1104, 769, "FUCK BUY", "#e060e0"); text(1104, 785, "OVER", "#e060e0"); text(1104, 799, "SOLD", "#e060e0"); vcol(1190, 759, "DSi", "#111");

// axes
[528, 744, 812].forEach(y => rect(62, y, 1802, 1, "#4a4d55"));
rect(1796, 97, 1, 744, "#4a4d55"); rect(62, 840, 1802, 1, "#dcdfe6");
[[163, "1.13500"], [206, "1.13400"], [249, "1.13300"], [292, "1.13200"], [334, "1.13100"], [420, "1.12900"], [462, "1.12800"], [504, "1.12700"], [537, "100.0000"], [571, "80.0000"], [606, "60.0000"], [641, "40.0000"], [677, "20.0000"], [712, "0.0000"], [774, "5K"], [808, "0"]].forEach(([y, t]) => { rect(1797, y, 4, 1, "#4a4d55"); text(1805, y + 4, t, "", "ax", "start"); });
const tag = (x, y, w, h, c, t) => { rect(x, y, w, h, c); rect(1797, y + h / 2, 4, 1, "#fff"); text(1805, y + h / 2 + 4, t, "", "ax", "start", 'style="fill:#fff"'); };
dash(62, 117, 1796, "#888", 1, "6 6");
out.push('<path d="M1600.500 97V812" stroke="#888" stroke-dasharray="7 5"/>');
tag(1777, 108, 80, 19, "#4c525e", "1.13610"); tag(1796, 253, 61, 19, "#3f93e8", "1.13268"); tag(1796, 315, 61, 18, "#000", "1.13125");
rect(1814, 334, 43, 19, "#000"); text(1818, 348, "09:49", "", "ax", "start", 'style="fill:#fff"');
tag(1796, 353, 61, 19, "#3f93e8", "1.13106"); tag(1796, 372, 61, 18, "#3f93e8", "1.13026");
out.push('<circle cx="1781" cy="116" r="8.500" fill="none" stroke="#f08040" stroke-width="1.500"/><path d="M1781 111v7h4" fill="none" stroke="#f08040" stroke-width="1.500"/><path d="M1784 117h7M1787 113v8" stroke="#fff"/>');
[[207, "Mar"], [368, "06:00"], [529, "12:00"], [689, "18:00"], [851, "4"], [1011, "06:00"], [1172, "12:00"], [1333, "18:00"], [1494, "5"], [1654, "06:00"]].forEach(([x, t]) => { rect(x, 812, 1, 4, "#4a4d55"); text(x, 832, t, "", "ax", "middle", t === "Mar" ? 'style="font-weight:bold"' : ""); });
rect(1545, 813, 108, 24, "#4c525e"); rect(1600, 813, 1, 4, "#fff"); text(1599, 830, "05 Mar '19 &#160; 04:00", "", "ax", "middle", 'style="fill:#fff"');
out.push('<circle cx="1828" cy="827" r="5" fill="none" stroke="#333" stroke-width="1.300"/><path stroke="#333" stroke-width="1.500" d="M1828 819v3M1828 832v3M1820 827h3M1833 827h3M1822 821l2 2M1832 831l2 2M1834 821l-2 2M1824 831l-2 2"/>');
plot.innerHTML = out.join("");

// indicator legend buttons
const icons = [["Hide", '<circle cx="6.500" cy="6.500" r="4"/><circle cx="6.500" cy="6.500" r=".5"/>'], ["Format", '<circle cx="6.500" cy="6.500" r="3"/><path d="M6.500 1v2M6.500 10v2M1 6.500h2M10 6.500h2M3 3l1 1M9 9l1 1M10 3L9 4M4 9l-1 1"/>'], ["Source", '<path d="M5 2Q3 2 3 4t-2 2.500Q3 7 3 9t2 2M8 2q2 0 2 2t2 2.500Q10 7 10 9t-2 2" stroke-width="1.500"/>'], ["Add", '<path d="M6.500 2v9M2 6.500h9"/>'], ["Delete", '<path d="M3 3l7 7M10 3l-7 7"/>']];
document.querySelectorAll(".tools").forEach(el => { el.innerHTML = icons.map(([n, d]) => `<button aria-label="${n}"><svg viewBox="0 0 13 13">${d}</svg></button>`).join(""); });
```
